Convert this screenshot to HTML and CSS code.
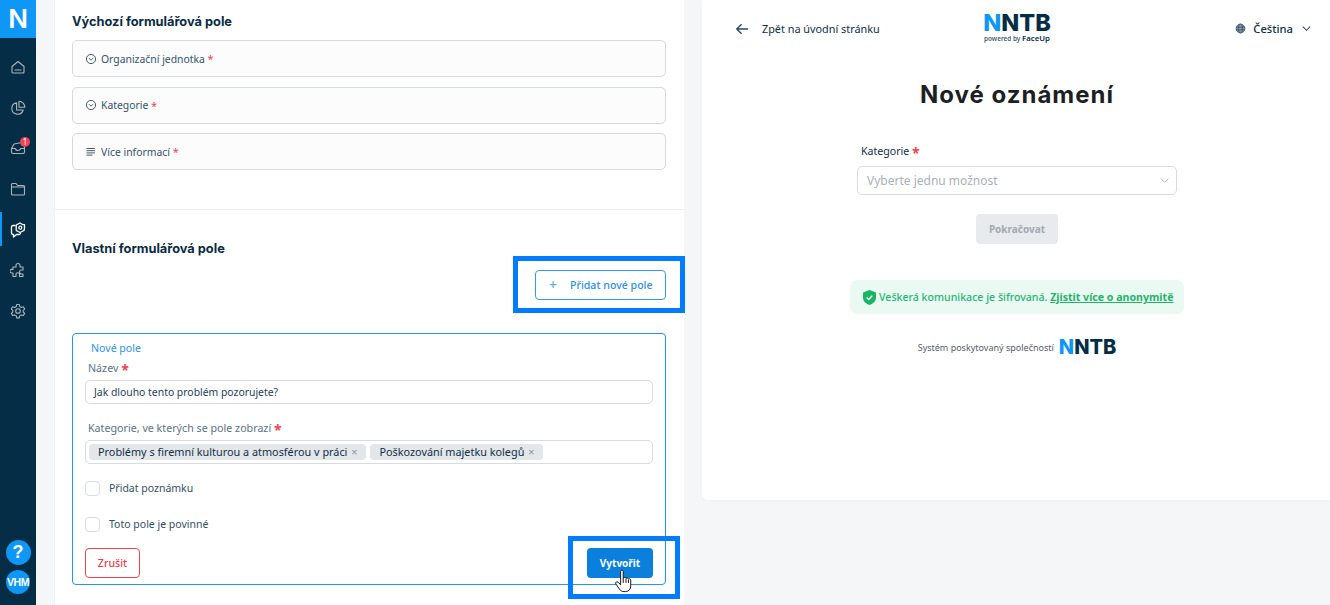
FILE: index.html
```html
<!DOCTYPE html>
<html lang="cs">
<head>
<meta charset="utf-8">
<title>Nové oznámení</title>
<link rel="stylesheet" href="styles.css">
</head>
<body>
<div class="app">
  <aside class="sidebar">
    <div class="brand">N</div>
    <nav class="nav">
      <a class="nav-item"><svg viewBox="0 0 16 16" class="nav-icon"><path d="M2 13V7.500L8 2.500l6 5V13a1 1 0 0 1-1 1H3a1 1 0 0 1-1-1zM5 11h6"/></svg></a>
      <a class="nav-item"><svg viewBox="0 0 16 16" class="nav-icon"><path d="M6.600 2.700a5.800 5.800 0 1 0 6.600 7.300H6.600z"/><path d="M9 1.300v6h5.800A5.900 5.900 0 0 0 9 1.300z"/></svg></a>
      <a class="nav-item"><svg viewBox="0 0 16 16" class="nav-icon"><path d="M1.500 8.500 4 4l8-1.500L14.500 7v5a1.500 1.500 0 0 1-1.500 1.500H3A1.500 1.500 0 0 1 1.500 12zM1.500 8.500h4a2.500 2 0 0 0 5 0h4"/></svg><span class="badge">1</span></a>
      <a class="nav-item"><svg viewBox="0 0 16 16" class="nav-icon"><path d="M1.500 3.500a1 1 0 0 1 1-1h3.500l1.500 2h6a1 1 0 0 1 1 1V13a1 1 0 0 1-1 1h-11a1 1 0 0 1-1-1zM1.500 6h13"/></svg></a>
      <a class="nav-item active"><svg viewBox="0 0 16 16" class="nav-icon"><path d="M5 3.500H3a1.500 1.500 0 0 0-1.500 1.500v6A1.500 1.500 0 0 0 3 12.500h.5v2.500l3-2.500H9a2 2 0 0 0 1.500-1"/><path d="m10 1 3 1.700 1.500 0v3.600L14 8.500l-4 2-3.800-2V3z"/><circle cx="10.300" cy="5.700" r="1.500"/></svg></a>
      <a class="nav-item"><svg viewBox="0 0 16 16" class="nav-icon"><path d="M6 3.500a2 2 0 1 1 4 0V5h3v3h-1.500a2 2 0 1 0 0 4H13v2.500H9.500V13a1.800 1.800 0 1 0-3.500 0v1.500H3V11H1.700a1.800 1.800 0 1 1 0-3.600H3V5h3z"/></svg></a>
      <a class="nav-item"><svg viewBox="0 0 16 16" class="nav-icon"><circle cx="8" cy="8" r="2.300"/><path d="m6.700 1.500h2.600l.4 2 1.700 1 2-.7 1.300 2.300-1.500 1.300v1.600l1.500 1.300-1.300 2.300-2-.7-1.700 1-.4 2H6.700l-.4-2-1.700-1-2 .7-1.300-2.300 1.500-1.300V7.400L1.300 6.100l1.300-2.300 2 .7 1.700-1z"/></svg></a>
    </nav>
    <div class="side-bottom">
      <span class="round help">?</span>
      <span class="round user">VHM</span>
    </div>
  </aside>

  <main class="editor">
    <section class="section first">
      <h2 class="section-title">Výchozí formulářová pole</h2>
      <div class="field-list">
        <div class="field-row"><svg viewBox="0 0 12 12" class="field-icon"><circle cx="6" cy="6" r="4.600"/><path d="m4 5.200 2 2 2-2"/></svg>Organizační jednotka <span class="req">*</span></div>
        <div class="field-row"><svg viewBox="0 0 12 12" class="field-icon"><circle cx="6" cy="6" r="4.600"/><path d="m4 5.200 2 2 2-2"/></svg>Kategorie <span class="req">*</span></div>
        <div class="field-row"><svg viewBox="0 0 12 12" class="field-icon"><path d="M1.500 2.500h8.500M1.500 4.700h8.500M1.500 6.900h8.500M1.500 9.100h6"/></svg>Více informací <span class="req">*</span></div>
      </div>
    </section>

    <section class="section second">
      <h2 class="section-title">Vlastní formulářová pole</h2>
      <div class="add-row">
        <button class="add-btn"><span class="plus">+</span>Přidat nové pole</button>
        <div class="focus-box add-focus"></div>
      </div>

      <form class="new-field">
        <div class="new-title">Nové pole</div>
        <label class="form-label">Název <span class="req-label">*</span></label>
        <div class="text-input">Jak dlouho tento problém pozorujete?</div>
        <label class="form-label spaced">Kategorie, ve kterých se pole zobrazí <span class="req-label">*</span></label>
        <div class="multi-input">
          <span class="chip">Problémy s firemní kulturou a atmosférou v práci <i class="chip-x">×</i></span>
          <span class="chip">Poškozování majetku kolegů <i class="chip-x">×</i></span>
        </div>
        <div class="check-row one"><span class="check"></span>Přidat poznámku</div>
        <div class="check-row two"><span class="check"></span>Toto pole je povinné</div>
        <div class="form-actions">
          <button type="button" class="cancel">Zrušit</button>
          <button type="button" class="create">Vytvořit</button>
          <div class="focus-box create-focus"></div>
          <svg class="hand" viewBox="0 0 20 26"><path d="M6.500 2.500c0-1.800 2.700-1.800 2.700 0v7l.3-.2c.6-1 2.400-.8 2.600.4.800-.8 2.400-.5 2.600.7.900-.6 2.300-.1 2.300 1.100v6c0 3.500-2 6-5.500 6h-1.500c-2.500 0-3.700-1-5-3L1.500 15.500c-1-1.700 1.200-3 2.400-1.700l2.600 2.700z"/><path d="M9.200 9.500v5M12.100 10v4.500M14.700 11v3.500"/></svg>
        </div>
      </form>
    </section>
  </main>

  <div class="preview-wrap">
    <section class="preview">
      <header class="preview-head">
        <a class="back"><svg viewBox="0 0 16 16" class="back-icon"><path d="M15 8H2M7.500 2.500 2 8l5.500 5.500"/></svg>Zpět na úvodní stránku</a>
        <div class="logo"><span class="logo-word"><b>N</b>NTB</span><span class="logo-sub">powered by <em>FaceUp</em></span></div>
        <div class="lang"><svg viewBox="0 0 12 12" class="globe"><circle cx="6" cy="6" r="4.800"/><ellipse cx="6" cy="6" rx="2.200" ry="4.800"/><path d="M1.200 4.500h9.600M1.200 7.500h9.600"/></svg>Čeština<svg viewBox="0 0 12 12" class="caret"><path d="m2 4 4 4 4-4"/></svg></div>
      </header>
      <div class="preview-body">
        <h1 class="preview-title">Nové oznámení</h1>
        <div class="select-block">
          <label class="select-label">Kategorie <span class="req-label">*</span></label>
          <div class="select">Vyberte jednu možnost<svg viewBox="0 0 12 12" class="select-caret"><path d="m2 4 4 4 4-4"/></svg></div>
        </div>
        <button class="continue">Pokračovat</button>
        <div class="secure">
          <svg viewBox="0 0 14 16" class="shield"><path d="M7 0 14 2.500V8c0 4-3 6.700-7 8-4-1.300-7-4-7-8V2.500z"/><path class="tick" d="m4 8 2.200 2.200L10 6"/></svg>
          <span>Veškerá komunikace je šifrovaná. <a class="secure-link">Zjistit více o anonymitě</a></span>
        </div>
        <div class="provided">Systém poskytovaný společností <span class="logo-word small"><b>N</b>NTB</span></div>
      </div>
    </section>
  </div>
</div>
</body>
</html>
```

FILE: styles.css
```css
* { box-sizing: border-box; }
html, body { margin: 0; height: 605px; overflow: hidden; }
body { font-family: "Noto Sans", "Open Sans", sans-serif; font-size: 12px; color: #0b2c44; background: #f5f6f8; }
button { font-family: inherit; }

.app { display: flex; height: 605px; }

/* sidebar */
.sidebar { width: 36px; flex: none; background: #062d46; display: flex; flex-direction: column; }
.brand { height: 38px; background: #0e97f5; color: #fff; font: 600 26px/38px "Inter", sans-serif; text-align: center; }
.nav { display: flex; flex-direction: column; padding-top: 9px; }
.nav-item { position: relative; height: 40.600px; display: flex; align-items: center; justify-content: center; }
.nav-icon { width: 16px; height: 16px; fill: none; stroke: #a9b6c0; stroke-width: 1.100; stroke-linejoin: round; stroke-linecap: round; }
.nav-item.active::before { content: ""; position: absolute; left: 0; top: 3px; width: 2px; height: 34px; background: #0e97f5; }
.nav-item.active .nav-icon { stroke: #fff; stroke-width: 1.300; }
.badge { position: absolute; left: 20px; top: 9px; width: 10px; height: 10px; border-radius: 50%; background: #f2414f; color: #fff; font-size: 8px; line-height: 10px; text-align: center; }
.side-bottom { margin-top: auto; padding-bottom: 11px; display: flex; flex-direction: column; align-items: center; gap: 5px; }
.round { width: 25px; height: 25px; border-radius: 50%; background: #0e97f5; color: #fff; text-align: center; font-family: "Liberation Sans", sans-serif; font-weight: 700; }
.help { font-size: 18px; line-height: 25px; }
.user { width: 24px; height: 24px; font-size: 10.500px; line-height: 24px; letter-spacing: -.5px; }

/* editor */
.editor { width: 630px; margin-left: 18px; flex: none; height: 605px; background: #fff; border-left: 1px solid #f0f1f3; }
.section { padding: 0 18px 0 17px; }
.section.first { height: 210px; padding-top: 12px; border-bottom: 1px solid #eceef0; }
.section-title { margin: 0; font: 700 12.800px/19px "Inter", sans-serif; color: #0b2c44; }
.field-list { display: flex; flex-direction: column; gap: 9.500px; margin-top: 9px; }
.field-row { height: 37px; display: flex; align-items: center; padding-left: 12px; background: #fcfcfc; border: 1px solid #d5dadf; border-radius: 5px; color: #33526a; font-size: 10.400px; white-space: pre; }
.field-icon { width: 12px; height: 12px; margin-right: 4px; fill: none; stroke: #34495c; stroke-width: .9; }
.req { color: #f2414f; font-size: 11px; }
.req-label { color: #f2414f; font-weight: 700; font-size: 14px; line-height: 0; vertical-align: -3px; }

.section.second { padding-top: 29px; }
.add-row { position: relative; display: flex; justify-content: flex-end; margin-top: 12px; }
.add-btn { width: 131px; height: 30px; padding: 0 0 0 13px; display: flex; align-items: center; background: #fff; border: 1px solid #2f9cf0; border-radius: 4px; color: #2f8fe8; font-size: 10.600px; font-weight: 500; }
.plus { width: 21px; font-size: 14px; line-height: 14px; text-align: left; color: #5eaef2; }
.focus-box { position: absolute; border: 5px solid #007cfc; pointer-events: none; }
.add-focus { right: -19px; top: -14px; width: 172px; height: 57px; }

.new-field { margin-top: 33px; height: 252px; padding: 6px 12px 0 12px; border: 1px solid #2196f3; border-radius: 4px; display: flex; flex-direction: column; }
.new-title { padding-left: 6px; color: #2f8fe8; font-size: 10.600px; line-height: 16px; }
.form-label { padding-left: 3px; margin-top: 4px; line-height: 17px; color: #5c7385; font-size: 10.700px; }
.form-label.spaced { margin-top: 16px; }
.text-input { margin-top: 3px; height: 24px; line-height: 23px; padding-left: 8px; border: 1px solid #d8dce0; border-radius: 5px; color: #23405a; font-size: 10.400px; }
.multi-input { margin-top: 3px; height: 24px; padding: 3px; display: flex; gap: 4px; border: 1px solid #d8dce0; border-radius: 5px; }
.chip { height: 16px; padding: 0 9px 0 9px; background: #e4e7ea; border-radius: 4px; line-height: 15px; font-size: 10.850px; color: #0f2e46; white-space: nowrap; }
.chip-x { font-style: normal; color: #8a959e; margin-left: 1px; }
.check-row { display: flex; align-items: center; height: 16px; color: #334f66; font-size: 10.500px; }
.check-row.one { margin-top: 16px; }
.check-row.two { margin-top: 20px; }
.check { width: 15px; height: 15px; margin-right: 9px; border: 1px solid #d8dce0; border-radius: 4px; }
.form-actions { position: relative; display: flex; justify-content: space-between; margin-top: 16px; }
.cancel { width: 55px; height: 30px; padding: 0; background: #fff; border: 1px solid #ef4452; border-radius: 4px; color: #ef3b4a; font-size: 10.600px; font-weight: 500; }
.create { width: 66px; height: 30px; padding: 0; background: #0a7fdc; border: 0; border-radius: 4px; color: #fff; font-size: 10px; font-weight: 700; }
.create-focus { right: -27px; top: -12px; width: 112px; height: 63px; }
.hand { position: absolute; right: 19px; top: 21px; width: 20px; height: 25px; fill: #fff; stroke: #111; stroke-width: 1; stroke-linejoin: round; }

/* preview */
.preview-wrap { flex: 1; padding-left: 18px; }
.preview { height: 500px; background: #fff; border-radius: 0 0 0 6px; box-shadow: 0 1px 2px rgba(10,40,60,.04); }
.preview-head { display: flex; align-items: center; height: 57px; padding: 0 18px 0 33px; }
.back { width: 248px; flex: none; display: flex; align-items: center; font-size: 10.850px; color: #0f2e46; }
.back-icon { width: 14px; height: 14px; margin-right: 13px; fill: none; stroke: #2c4a60; stroke-width: 1.600; }
.logo { display: flex; flex-direction: column; align-items: center; width: 68px; margin-top: -5px; }
.logo-word { font: 800 23.500px/23px "Inter", sans-serif; color: #062d46; letter-spacing: 0; }
.logo-word b { color: #0e97f5; font-weight: 800; }
.logo-sub { margin-top: 1px; font-size: 6.400px; line-height: 7px; font-weight: 600; color: #4a5e6e; white-space: nowrap; }
.logo-sub em { font-style: normal; font-size: 7.800px; color: #062d46; }
.lang { margin-left: auto; display: flex; align-items: center; font-size: 11.200px; font-weight: 500; color: #0f2e46; }
.globe { width: 11px; height: 11px; margin-right: 7px; fill: #8a98a4; stroke: #2c4a60; stroke-width: .8; }
.caret { width: 11px; height: 11px; margin-left: 8px; fill: none; stroke: #2c4a60; stroke-width: 1.100; }
.preview-body { display: flex; flex-direction: column; align-items: center; padding-left: 2px; }
.preview-title { margin: 21px 0 0; font: 700 24px/33px "Inter", sans-serif; letter-spacing: 1px; color: #1d1f24; }
.select-block { width: 320px; margin-top: 32px; }
.select-label { display: block; padding-left: 4px; font-size: 10.600px; line-height: 16px; color: #0f2e46; }
.select { margin-top: 7px; height: 29px; display: flex; align-items: center; justify-content: space-between; padding: 0 6px 0 9px; border: 1px solid #d8dce0; border-radius: 5px; color: #a9b0b7; font-size: 12px; }
.select-caret { width: 11px; height: 11px; fill: none; stroke: #9aa5ae; stroke-width: .9; }
.continue { margin-top: 19px; width: 82px; height: 30px; padding: 0; border: 0; border-radius: 4px; background: #e8ebee; color: #a1a8b0; font-size: 10px; font-weight: 700; }
.secure { margin-top: 36px; width: 334px; height: 34px; display: flex; align-items: center; padding-left: 13px; background: #ebf9f3; border-radius: 7px; color: #25b673; font-size: 10.600px; font-weight: 500; white-space: nowrap; }
.shield { width: 13px; height: 15px; margin-right: 3px; flex: none; fill: #19b565; }
.tick { fill: none; stroke: #fff; stroke-width: 1.500; }
.secure-link { font-weight: 700; color: #1fb46a; text-decoration: underline; }
.provided { margin-top: 22px; display: flex; align-items: center; gap: 5px; color: #55606a; font-size: 9px; height: 22px; }
.logo-word.small { font-size: 20px; line-height: 20px; }
```
